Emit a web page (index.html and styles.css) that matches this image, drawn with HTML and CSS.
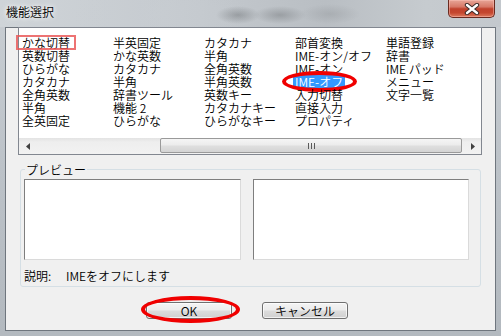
FILE: index.html
```html
<!DOCTYPE html>
<html lang="ja">
<head>
<meta charset="utf-8">
<title>機能選択</title>
<link rel="stylesheet" href="styles.css">
</head>
<body>
<div class="window">
  <div class="titlebar">
    <span class="title">機能選択</span>
    <button class="close" aria-label="閉じる">
      <svg width="16" height="12" viewBox="0 0 16 12">
        <path d="M3 2 L13 10 M13 2 L3 10" stroke="#3b2a28" stroke-width="4.4" stroke-linecap="round" fill="none"/>
        <path d="M3 2 L13 10 M13 2 L3 10" stroke="#ffffff" stroke-width="2.4" stroke-linecap="round" fill="none"/>
      </svg>
    </button>
  </div>
  <div class="client">
    <div class="listbox">
      <div class="items">
        <span class="item marked">かな切替</span>
        <span class="item">英数切替</span>
        <span class="item">ひらがな</span>
        <span class="item">カタカナ</span>
        <span class="item">全角英数</span>
        <span class="item">半角</span>
        <span class="item">全英固定</span>

        <span class="item">半英固定</span>
        <span class="item">かな英数</span>
        <span class="item">カタカナ</span>
        <span class="item">半角</span>
        <span class="item">辞書ツール</span>
        <span class="item">機能 2</span>
        <span class="item">ひらがな</span>

        <span class="item">カタカナ</span>
        <span class="item">半角</span>
        <span class="item">全角英数</span>
        <span class="item">半角英数</span>
        <span class="item">英数キー</span>
        <span class="item">カタカナキー</span>
        <span class="item">ひらがなキー</span>

        <span class="item">部首変換</span>
        <span class="item">IME-オン/オフ</span>
        <span class="item">IME-オン</span>
        <span class="item selected">IME-オフ</span>
        <span class="item">入力切替</span>
        <span class="item">直接入力</span>
        <span class="item">プロパティ</span>

        <span class="item">単語登録</span>
        <span class="item">辞書</span>
        <span class="item">IME パッド</span>
        <span class="item">メニュー</span>
        <span class="item">文字一覧</span>
      </div>
      <div class="hscroll">
        <div class="sb-btn">
          <svg width="4" height="7" viewBox="0 0 4 7"><path d="M4 0 L0 3.5 L4 7 Z" fill="#404040"/></svg>
        </div>
        <div class="track">
          <div class="thumb">
            <svg width="7" height="6" viewBox="0 0 7 6"><path d="M0.5 0 V6 M3.5 0 V6 M6.5 0 V6" stroke="#5a5a5a" stroke-width="1"/></svg>
          </div>
        </div>
        <div class="sb-btn">
          <svg width="4" height="7" viewBox="0 0 4 7"><path d="M0 0 L4 3.5 L0 7 Z" fill="#404040"/></svg>
        </div>
      </div>
    </div>
    <fieldset class="group">
      <legend class="group-label">プレビュー</legend>
      <div class="previews">
        <div class="pv pv-left"></div>
        <div class="pv pv-right"></div>
      </div>
      <div class="desc">
        <span class="desc-label">説明:</span>
        <span class="desc-text">IMEをオフにします</span>
      </div>
    </fieldset>
    <div class="buttons">
      <button class="btn btn-ok">OK</button>
      <button class="btn">キャンセル</button>
    </div>
  </div>
</div>
</body>
</html>
```

FILE: styles.css
```css
html, body {
  margin: 0;
  padding: 0;
}
body {
  width: 501px;
  height: 336px;
  overflow: hidden;
  font-family: "Noto Sans CJK JP", "Noto Sans", sans-serif;
  font-size: 12px;
  font-weight: 350;
  color: #000;
}
.window {
  width: 501px;
  height: 336px;
  display: flex;
  flex-direction: column;
  background: linear-gradient(180deg, #c9ced3 0%, #bcc2c8 50%, #b3b9bf 100%);
}
.titlebar {
  height: 27px;
  flex: none;
  display: flex;
  align-items: flex-start;
  background:
    radial-gradient(ellipse 22px 9px at 238px 15px, rgba(120,124,128,0.55), rgba(120,124,128,0) 100%),
    radial-gradient(ellipse 26px 9px at 280px 15px, rgba(120,124,128,0.5), rgba(120,124,128,0) 100%),
    radial-gradient(ellipse 30px 10px at 330px 14px, rgba(140,144,148,0.35), rgba(140,144,148,0) 100%),
    radial-gradient(ellipse 90px 30px at 160px 14px, rgba(200,205,210,0.5), rgba(200,205,210,0) 100%),
    linear-gradient(90deg, #cfd4d8 0%, #c4c9ce 40%, #b9bec3 65%, #c6cbcf 85%, #c3c8cd 100%);
}
.title {
  padding: 5px 0 0 6px;
  line-height: 14px;
  font-size: 12px;
  color: #000;
  text-shadow: 0 0 4px rgba(255,255,255,0.95), 0 0 7px rgba(255,255,255,0.8);
}
.close {
  margin-left: auto;
  margin-right: 6px;
  width: 47px;
  height: 18px;
  padding: 0;
  border: 1px solid #6a2a20;
  border-top: none;
  border-radius: 0 0 5px 5px;
  background: linear-gradient(180deg, #e7a597 0%, #d77867 40%, #c0412c 52%, #c5472f 75%, #dc7a5e 100%);
  box-shadow: inset 0 0 0 1px rgba(255,200,190,0.45);
  display: flex;
  align-items: center;
  justify-content: center;
}
.client {
  flex: 1;
  margin: 0 5px 5px;
  border: 1px solid #6f767e;
  background: #f0f0f0;
  display: flex;
  flex-direction: column;
  min-height: 0;
}
.listbox {
  margin: -1px 13px 0 12px;
  border: 1px solid #828790;
  background: #fff;
  display: flex;
  flex-direction: column;
}
.items {
  height: 110px;
  box-sizing: border-box;
  padding: 8px 0 0 1px;
  display: grid;
  grid-auto-flow: column;
  grid-template-rows: repeat(7, 13px);
  grid-auto-columns: 91px;
  line-height: 13px;
}
.item {
  justify-self: start;
  padding: 0 2px;
  position: relative;
  white-space: nowrap;
}
.item.selected {
  background: #3399ff;
  color: #fff;
}
.item.selected::after {
  content: "";
  position: absolute;
  left: -11px;
  right: -12px;
  top: -4px;
  bottom: -4px;
  border: 4px solid #f00000;
  border-radius: 50%;
}
.item.marked::after {
  content: "";
  position: absolute;
  left: -4px;
  top: -1px;
  width: 60px;
  height: 15px;
  box-sizing: border-box;
  border: 2px solid rgba(232, 80, 80, 0.8);
}
.hscroll {
  height: 16px;
  display: flex;
  background: linear-gradient(180deg, #e3e3e3 0%, #eeeeee 25%, #f2f2f2 100%);
}
.sb-btn {
  width: 17px;
  flex: none;
  display: flex;
  align-items: center;
  justify-content: center;
}
.track {
  flex: 1;
  display: flex;
}
.thumb {
  margin-left: 124px;
  width: 302px;
  box-sizing: border-box;
  height: 15px;
  border: 1px solid #9a9a9a;
  border-radius: 2px;
  background: linear-gradient(180deg, #f5f5f5 0%, #ececec 45%, #dedede 55%, #d4d4d4 100%);
  display: flex;
  align-items: center;
  justify-content: center;
}
.group {
  margin: 8px 14px 0;
  padding: 3px 11px 4px 3px;
  border: 1px solid #d5dfe5;
  border-radius: 3px;
  min-inline-size: 0;
}
.group-label {
  padding: 0 1px;
  margin-left: 1px;
  line-height: 13px;
  font-size: 12px;
}
.previews {
  display: flex;
  gap: 12px;
}
.pv {
  height: 81px;
  box-sizing: border-box;
  background: #fff;
  border: 1px solid;
  border-color: #7e7e7e #dadada #dadada #7e7e7e;
}
.pv-left {
  width: 217px;
}
.pv-right {
  width: 216px;
}
.desc {
  margin-top: 9px;
  line-height: 13px;
  display: flex;
}
.desc-label {
  width: 42px;
  flex: none;
}
.buttons {
  margin-top: 15px;
  padding-left: 140px;
  display: flex;
  gap: 30px;
}
.btn {
  width: 86px;
  height: 17px;
  padding: 0;
  box-sizing: border-box;
  border: 1px solid #707070;
  border-radius: 3px;
  background: linear-gradient(180deg, #f4f4f4 0%, #ececec 48%, #dcdcdc 52%, #d0d0d0 100%);
  box-shadow: inset 0 0 0 1px rgba(255,255,255,0.7);
  font-family: "Noto Sans CJK JP", "Noto Sans", sans-serif;
  font-size: 12px;
  font-weight: 350;
  line-height: 15px;
  color: #000;
}
.btn-ok {
  position: relative;
}
.btn-ok::after {
  content: "";
  position: absolute;
  left: -6px;
  right: -9px;
  top: -7px;
  bottom: -5px;
  border: 4px solid #f00000;
  border-radius: 50%;
}
```
